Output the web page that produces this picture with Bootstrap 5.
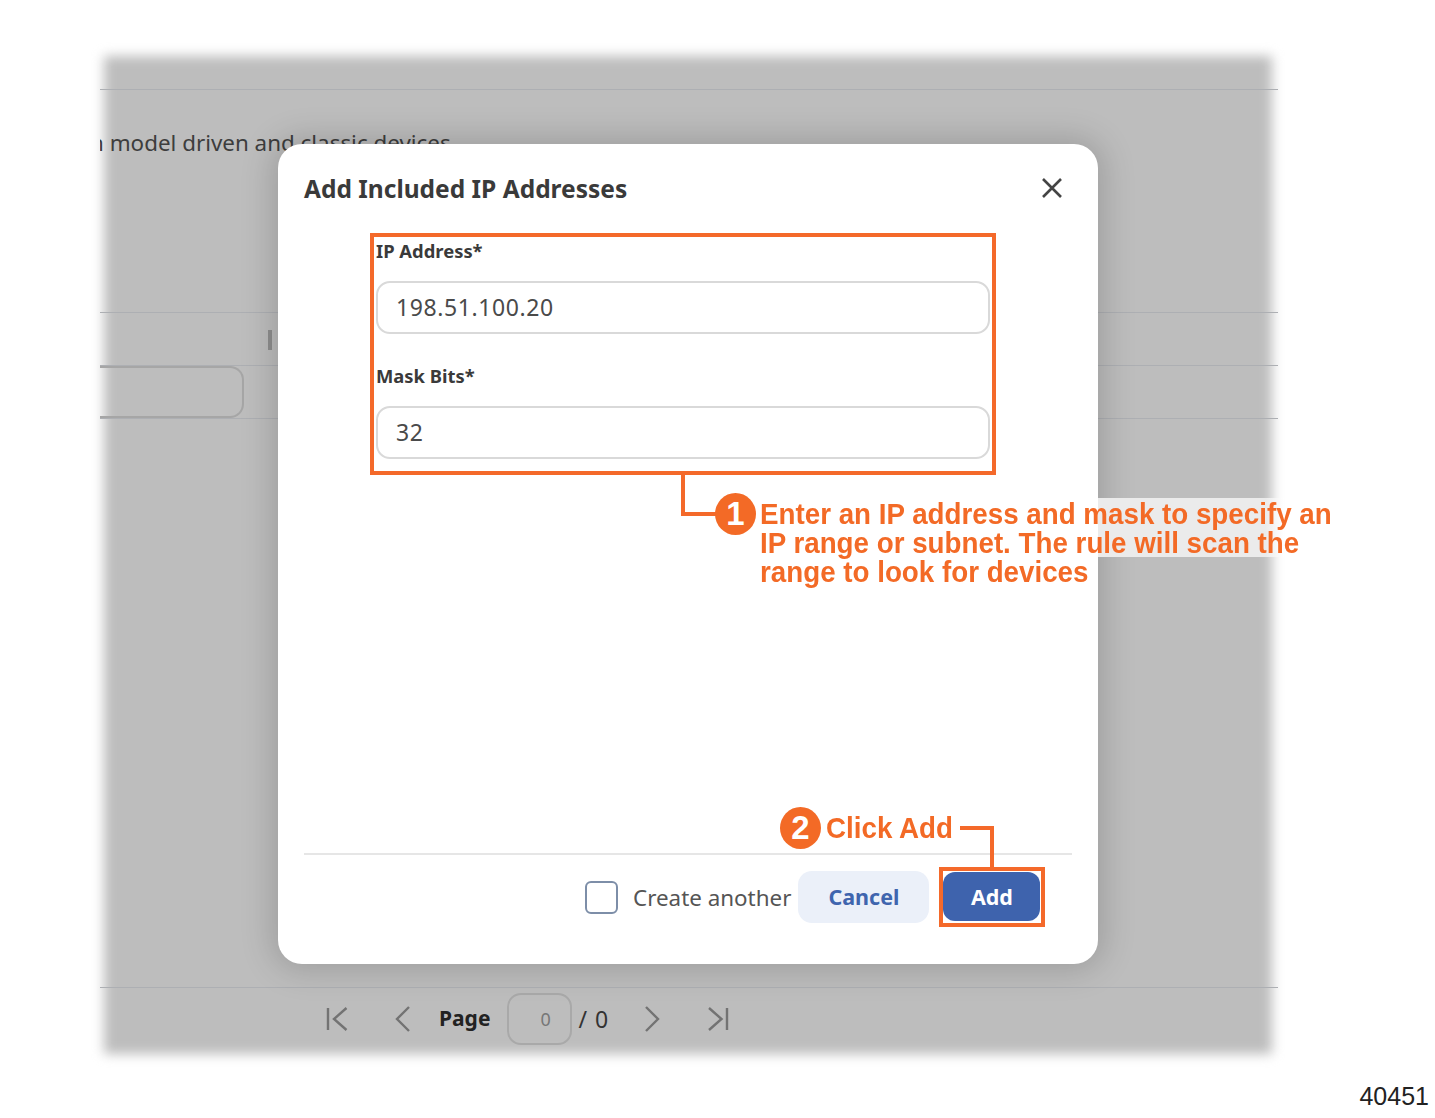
<!DOCTYPE html>
<html lang="en">
<head>
    <meta charset="UTF-8">
    <meta name="viewport" content="width=device-width, initial-scale=1.0">
    <title>Add Included IP Addresses</title>
    <link href="https://cdn.jsdelivr.net/npm/bootstrap@5.3.0/dist/css/bootstrap.min.css" rel="stylesheet">
    <style>
        body {
            background: #fff;
            font-family: "Noto Sans", sans-serif;
        }

        .figure-canvas {
            position: relative;
            width: 1435px;
            height: 1118px;
            overflow: hidden;
            padding: 60px 163px 70px 106px;
        }

        /* dimmed page behind the dialog, soft edges come from the blurred layer */
        .dim-page {
            position: relative;
            height: 988px;
            color: #3d3d3d;
        }

        .dim-page::before {
            content: "";
            position: absolute;
            inset: -4px 0 -6px -2px;
            background: #bdbdbd;
            filter: blur(6px);
        }

        .dim-page > * { position: relative; flex: 0 0 auto; }

        .dim-row {
            border-bottom: 1px solid #adafb3;
            margin-left: -6px;
            margin-right: -6px;
        }

        .dim-top { height: 30px; }
        .dim-intro { height: 223px; padding: 38px 0 0 0; font-size: 22.4px; line-height: 30px; white-space: nowrap; overflow: hidden; text-indent: -10px; }
        .dim-head { height: 53px; padding: 17px 0 0 168px; }
        .dim-filter { height: 53px; }
        .dim-body { height: 569px; }
        .dim-bar { width: 4px; height: 20px; background: #8e8e8e; }
        .dim-field { width: 144px; height: 52px; border: 2px solid #a6a6a6; border-left: 0; border-radius: 0 14px 14px 0; }

        .dim-pager { height: 60px; margin-left: -6px; padding: 2px 0 0 225px; color: #222; }
        .pager-page { font-weight: 700; font-size: 21px; margin: 0 17px 0 28px; }
        .pager-input { width: 65px; height: 52px; border: 2px solid #a9a9a9; border-radius: 14px; font-size: 18px; color: #777; padding-left: 31px; line-height: 48px; }
        .pager-total { font-size: 23px; margin: 0 35px 0 6px; color: #333; letter-spacing: 1px; }
        .pager-btn { color: #737373; line-height: 0; }
        .pager-gap-prev { margin-left: 46px; }
        .pager-gap-last { margin-left: 47px; }

        /* dialog */
        .dialog-wrap {
            position: absolute;
            left: 278px;
            top: 144px;
            width: 820px;
            height: 820px;
        }

        .dialog-wrap .modal-content {
            height: 100%;
            background: #fff;
            border: 0;
            border-radius: 24px;
            padding: 0 26px;
            box-shadow: 0 0 32px 6px rgba(0, 0, 0, .17);
        }

        .dialog-wrap .modal-header { border: 0; padding: 30px 0 0; height: 89px; align-items: flex-start; }
        .dialog-wrap .modal-title { font-size: 24.5px; font-weight: 700; color: #3a3a3a; line-height: 30px; }
        .dialog-close { background: none; border: 0; padding: 0; margin: 0 8px 0 0; color: #444; line-height: 0; }

        .dialog-wrap .modal-body { padding: 0 0 0 66px; }
        .callout-box { width: 626px; height: 242px; border: 4px solid #f4692a; padding: 0 2px; }
        .field-label { display: block; font-size: 18.4px; font-weight: 700; color: #3a3a3a; line-height: 22px; margin: 3px 0 19px; }
        .field-input.form-control {
            height: 53px;
            border: 2px solid #d9d9d9;
            border-radius: 14px;
            padding: 0 18px 2px;
            font-family: "Noto Sans", sans-serif;
            font-size: 23px;
            color: #4a4a4a;
            letter-spacing: .6px;
            margin-bottom: 31px;
        }

        .dialog-wrap .modal-footer { border-top: 2px solid #e6e6e6; padding: 0 0 37px; height: 111px; align-items: flex-start; justify-content: flex-start; flex-wrap: nowrap; margin: 0; }
        .create-check { display: flex; align-items: center; margin: 26px 7px 0 281px; }
        .create-check .form-check-input { width: 33px; height: 33px; margin: 0 15px 0 0; border: 2px solid #7d8ea8; border-radius: 6px; float: none; }
        .create-check label { font-size: 22.4px; color: #555; white-space: nowrap; }
        .btn-soft, .btn-solid { font-size: 21.5px; font-weight: 700; border: 0; line-height: 30px; }
        .btn-soft.btn { width: 131px; height: 52px; margin: 16px 10px 0 0; background: #ebf0f9; color: #3f65ae; border-radius: 14px; }
        .add-frame { width: 106px; height: 60px; margin: 12px 0 0 0; border: 4px solid #f4692a; }
        .btn-solid.btn { width: 97px; height: 49px; margin: 1px 0 0 0; padding: 0; background: #3e63ad; color: #fff; border-radius: 12px; display: block; }

        /* annotations lying over the figure */
        .note-text {
            position: absolute;
            font-family: "Liberation Sans", Arial, sans-serif;
            font-weight: 700;
            font-size: 30px;
            line-height: 29px;
            color: #f36a26;
            white-space: nowrap;
            transform-origin: 0 0;
            transform: scaleX(.925);
        }

        .note-one { left: 760px; top: 499px; }
        .note-two { left: 826px; top: 813px; }

        .note-num {
            position: absolute;
            width: 41px;
            height: 42px;
            border-radius: 50%;
            background: #f36a26;
            color: #fff;
            font-family: "Liberation Sans", Arial, sans-serif;
            font-weight: 700;
            font-size: 33px;
            line-height: 42px;
            text-align: center;
        }

        .num-one { left: 715px; top: 493px; }
        .num-two { left: 780px; top: 807px; }

        .note-band { position: absolute; left: 1098px; top: 498px; width: 186px; height: 59px; background: linear-gradient(to right, #ebebeb 90%, #fff); }
        .note-lines { position: absolute; left: 0; top: 0; pointer-events: none; }
        .fig-number { position: absolute; right: 6px; top: 1081px; font-family: "Liberation Sans", Arial, sans-serif; font-size: 25px; line-height: 30px; color: #222; }
    </style>
</head>
<body>
    <div class="figure-canvas">
        <!-- Dimmed page -->
        <div class="dim-page d-flex flex-column">
            <div class="dim-row dim-top"></div>
            <div class="dim-row dim-intro">n model driven and classic devices</div>
            <div class="dim-row dim-head"><div class="dim-bar"></div></div>
            <div class="dim-row dim-filter"><div class="dim-field"></div></div>
            <div class="dim-row dim-body"></div>
            <div class="dim-pager d-flex align-items-center">
                <span class="pager-btn">
                    <svg width="24" height="24" viewBox="0 0 24 24" fill="none" stroke="currentColor" stroke-width="2.4"><path d="M3 1v22M21.500 1 9 12l12.500 11"/></svg>
                </span>
                <span class="pager-btn pager-gap-prev">
                    <svg width="16" height="26" viewBox="0 0 16 26" fill="none" stroke="currentColor" stroke-width="2.4"><path d="M14 1 2 13l12 12"/></svg>
                </span>
                <span class="pager-page">Page</span>
                <span class="pager-input">0</span>
                <span class="pager-total">/ 0</span>
                <span class="pager-btn">
                    <svg width="16" height="26" viewBox="0 0 16 26" fill="none" stroke="currentColor" stroke-width="2.4"><path d="m2 1 12 12L2 25"/></svg>
                </span>
                <span class="pager-btn pager-gap-last">
                    <svg width="24" height="24" viewBox="0 0 24 24" fill="none" stroke="currentColor" stroke-width="2.4"><path d="M20 1v22M2 1l12.500 11L2 23"/></svg>
                </span>
            </div>
        </div>

        <!-- Dialog -->
        <div class="dialog-wrap">
            <div class="modal-content">
                <div class="modal-header">
                    <h5 class="modal-title">Add Included IP Addresses</h5>
                    <button type="button" class="dialog-close ms-auto" aria-label="Close">
                        <svg width="24" height="30" viewBox="0 0 24 30" fill="none" stroke="currentColor" stroke-width="2.6"><path d="m3 5 18 18M21 5 3 23"/></svg>
                    </button>
                </div>
                <div class="modal-body">
                    <div class="callout-box">
                        <label class="field-label" for="ipAddress">IP Address*</label>
                        <input id="ipAddress" class="form-control field-input" value="198.51.100.20">
                        <label class="field-label" for="maskBits">Mask Bits*</label>
                        <input id="maskBits" class="form-control field-input" value="32">
                    </div>
                </div>
                <div class="modal-footer">
                    <div class="create-check">
                        <input class="form-check-input" type="checkbox" id="createAnother">
                        <label for="createAnother">Create another</label>
                    </div>
                    <button type="button" class="btn btn-soft">Cancel</button>
                    <div class="add-frame">
                        <button type="button" class="btn btn-solid">Add</button>
                    </div>
                </div>
            </div>
        </div>

        <div class="note-band"></div>

        <!-- Callouts -->
        <svg class="note-lines" width="1435" height="1118" fill="none" stroke="#f4692a" stroke-width="4">
            <path d="M683 474v40h36"/>
            <path d="M960 828h32v40"/>
        </svg>
        <div class="note-num num-one">1</div>
        <div class="note-text note-one">Enter an IP address and mask to specify an<br>IP range or subnet. The rule will scan the<br>range to look for devices</div>
        <div class="note-num num-two">2</div>
        <div class="note-text note-two">Click Add</div>
        <div class="fig-number">40451</div>
    </div>

    <script src="https://cdn.jsdelivr.net/npm/bootstrap@5.3.0/dist/js/bootstrap.bundle.min.js"></script>
</body>
</html>
